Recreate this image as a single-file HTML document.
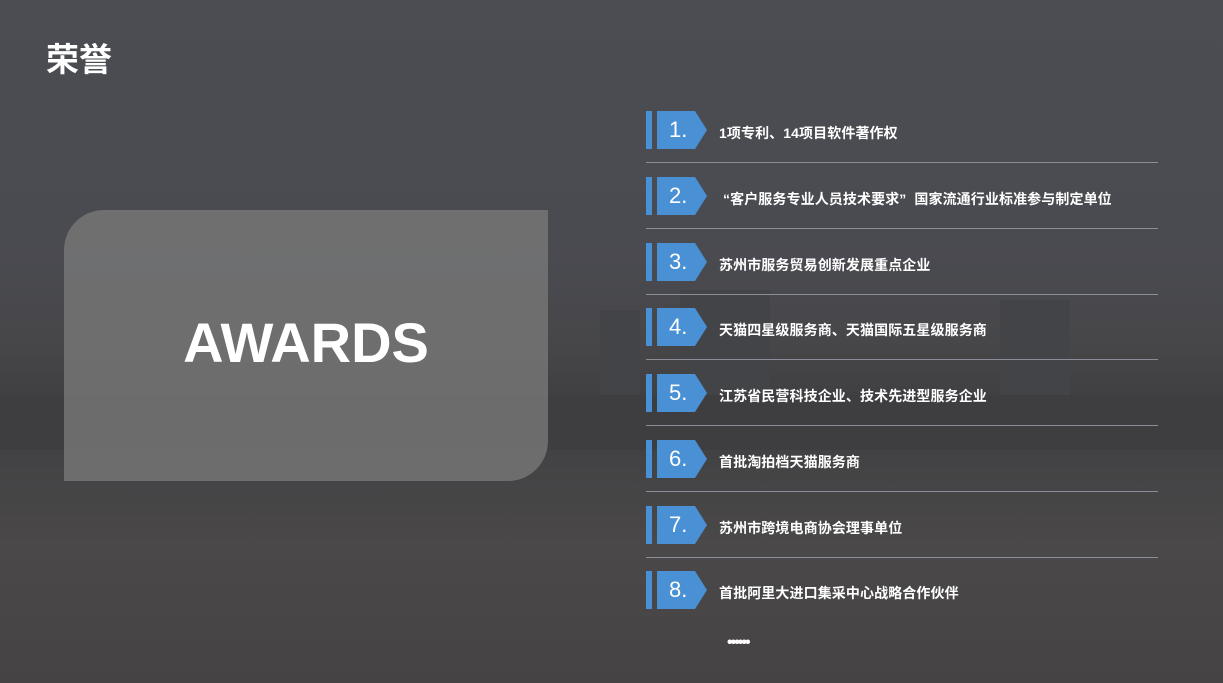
<!DOCTYPE html>
<html><head><meta charset="utf-8"><style>
*{margin:0;padding:0;box-sizing:border-box}
body{width:1223px;height:683px;overflow:hidden;position:relative;font-family:"Liberation Sans","Noto Sans CJK SC",sans-serif;
background:linear-gradient(180deg,#4b4d53 0%,#4a4b51 35%,#47474a 50%,#404043 58%,#424244 66%,#4a4848 80%,#454344 100%);}
.bld{position:absolute;background:#434448}
.title{position:absolute;left:46px;top:33px;color:#fff;font-size:33px;font-weight:bold}
.card{position:absolute;left:64px;top:210px;width:484px;height:271px;background:rgba(120,120,120,0.8);border-radius:40px 0 40px 0}
.aw{position:absolute;left:0;width:484px;top:100px;text-align:center;color:#fff;font-weight:bold;font-size:56px}
.item{position:absolute;left:646px;width:512px;height:66px}
.bar{position:absolute;left:0;top:0;width:6px;height:38px;background:#4a90d4}
.num{position:absolute;left:11px;top:0;width:50px;height:38px;background:#4a90d4;clip-path:polygon(0 0,38px 0,50px 19px,38px 38px,0 38px);color:#fff;font-size:22px;padding-left:12px;line-height:38px}
.txt{position:absolute;left:73px;top:3px;line-height:38px;color:#fff;font-weight:bold;font-size:14px;letter-spacing:0.1px}
.line{position:absolute;left:0;top:51px;width:512px;height:1px;background:#8a8e98}
</style></head><body>
<div class="bld" style="left:600px;top:310px;width:40px;height:100px"></div>
<div class="bld" style="left:680px;top:290px;width:90px;height:120px"></div>
<div class="bld" style="left:1000px;top:300px;width:70px;height:110px"></div>
<div class="bld" style="left:0;top:395px;width:1223px;height:55px;background:#3e3e41"></div>
<div class="title">荣誉</div>
<div class="card"><div class="aw">AWARDS</div></div>

<div class="item" style="top:111px"><div class="bar"></div><div class="num">1.</div><div class="txt">1项专利、14项目软件著作权</div><div class="line"></div></div>
<div class="item" style="top:177px"><div class="bar"></div><div class="num">2.</div><div class="txt">&nbsp;“客户服务专业人员技术要求”&nbsp; 国家流通行业标准参与制定单位</div><div class="line"></div></div>
<div class="item" style="top:243px"><div class="bar"></div><div class="num">3.</div><div class="txt">苏州市服务贸易创新发展重点企业</div><div class="line"></div></div>
<div class="item" style="top:308px"><div class="bar"></div><div class="num">4.</div><div class="txt">天猫四星级服务商、天猫国际五星级服务商</div><div class="line"></div></div>
<div class="item" style="top:374px"><div class="bar"></div><div class="num">5.</div><div class="txt">江苏省民营科技企业、技术先进型服务企业</div><div class="line"></div></div>
<div class="item" style="top:440px"><div class="bar"></div><div class="num">6.</div><div class="txt">首批淘拍档天猫服务商</div><div class="line"></div></div>
<div class="item" style="top:506px"><div class="bar"></div><div class="num">7.</div><div class="txt">苏州市跨境电商协会理事单位</div><div class="line"></div></div>
<div class="item" style="top:571px"><div class="bar"></div><div class="num">8.</div><div class="txt">首批阿里大进口集采中心战略合作伙伴</div></div>
<div style="position:absolute;left:727px;top:634px;color:#fff;font-weight:bold;font-size:16px;letter-spacing:-2px">••••••</div>
</body></html>
